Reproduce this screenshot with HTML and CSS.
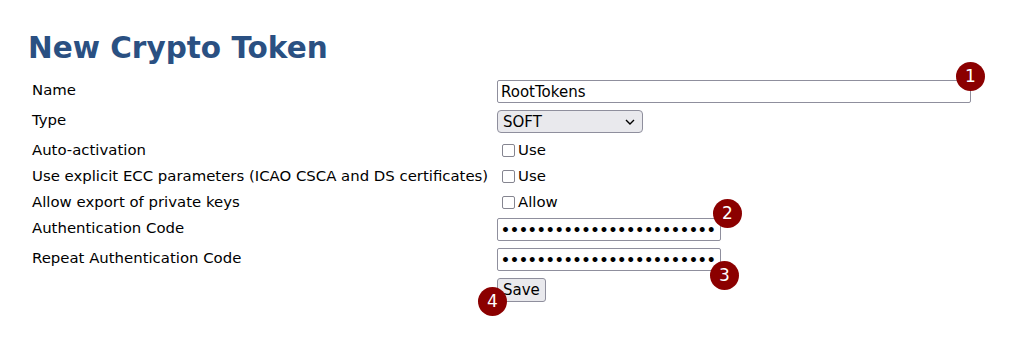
FILE: index.html
```html
<!DOCTYPE html>
<html>
  <head>
    <meta charset="utf-8" />
    <title>New Crypto Token</title>
    <link rel="stylesheet" href="styles.css">
  </head>
  <body>
    <main>
      <h1 class="title">New Crypto Token</h1>

      <form class="token-form">
        <div class="row row-input">
          <label class="label" for="name">Name</label>
          <span class="field">
            <input class="text text-wide" id="name" type="text" value="RootTokens" />
            <span class="badge badge-1">1</span>
          </span>
        </div>

        <div class="row row-input">
          <label class="label" for="type">Type</label>
          <span class="field">
            <select class="select" id="type">
              <option>SOFT</option>
            </select>
            <svg class="chevron" width="10" height="6" viewBox="0 0 10 6">
              <path d="M1 1L5 5L9 1" fill="none" stroke="#000" stroke-width="1.4" />
            </svg>
          </span>
        </div>

        <div class="row row-check">
          <span class="label">Auto-activation</span>
          <label class="check"><input type="checkbox" />Use</label>
        </div>

        <div class="row row-check">
          <span class="label">Use explicit ECC parameters (ICAO CSCA and DS certificates)</span>
          <label class="check"><input type="checkbox" />Use</label>
        </div>

        <div class="row row-check">
          <span class="label">Allow export of private keys</span>
          <label class="check"><input type="checkbox" />Allow</label>
        </div>

        <div class="row row-input">
          <label class="label" for="auth">Authentication Code</label>
          <span class="field">
            <input class="text text-pass" id="auth" type="password" value="abcdefghijklmnopqrstuvwx" />
            <span class="badge badge-2">2</span>
          </span>
        </div>

        <div class="row row-input">
          <label class="label" for="auth2">Repeat Authentication Code</label>
          <span class="field">
            <input class="text text-pass" id="auth2" type="password" value="abcdefghijklmnopqrstuvwx" />
            <span class="badge badge-3">3</span>
          </span>
        </div>

        <div class="row row-submit">
          <span class="label"></span>
          <span class="field">
            <button class="button" type="button">Save</button>
            <span class="badge badge-4">4</span>
          </span>
        </div>
      </form>
    </main>
  </body>
</html>
```

FILE: styles.css
```css
/* Basics */
body,
html {
  margin: 0;
  padding: 0;
  height: 100%;
}
body {
  background: #ffffff;
  color: #000000;
  font-family: "DejaVu Sans", Verdana, sans-serif;
  font-size: 14.9px;
}
* {
  box-sizing: border-box;
}

main {
  padding: 0 28px 40px 28px;
}

.title {
  margin: 31px 0 13px 0;
  font-size: 29.5px;
  line-height: 34px;
  font-weight: bold;
  color: #2a5082;
}

/* Form */
.token-form {
  display: grid;
  grid-template-columns: 465px auto;
  padding-left: 4px;
}
.row {
  display: contents;
}
.label {
  display: block;
  padding-top: 3px;
  line-height: 18px;
}
.row-input .label {
  height: 30px;
}
.row-check .label {
  height: 26px;
}
.field {
  position: relative;
  justify-self: start;
  align-self: start;
}

.text {
  display: block;
  height: 23px;
  margin: 2px 0 0 0;
  padding: 1px 3px;
  border: 1px solid #8f8f9d;
  border-radius: 2px;
  font-family: "DejaVu Sans", Verdana, sans-serif;
  font-size: 15px;
  color: #000000;
}
.text-wide {
  width: 474px;
}
.text-pass {
  width: 224px;
  font-size: 14px;
  font-weight: bold;
}

.select {
  display: block;
  width: 146px;
  height: 23px;
  margin-top: 2px;
  padding: 0 5px;
  border: 1px solid #8f8f9d;
  border-radius: 4px;
  background: #e9e9ed;
  font-family: "DejaVu Sans", Verdana, sans-serif;
  font-size: 15px;
  color: #000000;
  appearance: none;
}
.chevron {
  position: absolute;
  right: 8px;
  top: 11px;
  pointer-events: none;
}

.check {
  display: flex;
  align-items: center;
  height: 20px;
  margin: 2px 0 0 3px;
}
.check input {
  appearance: none;
  width: 13px;
  height: 13px;
  margin: 0 3px 0 2px;
  border: 1.5px solid #858590;
  border-radius: 2px;
  background: #ffffff;
}

.button {
  display: block;
  height: 24px;
  margin-top: 2px;
  padding: 1px 5px;
  border: 1px solid #8f8f9d;
  border-radius: 3px;
  background: #e9e9ed;
  font-family: "DejaVu Sans", Verdana, sans-serif;
  font-size: 15px;
  color: #000000;
}

/* Numbered markers */
.badge {
  position: absolute;
  width: 29px;
  height: 29px;
  border-radius: 50%;
  background: #8b0000;
  color: #ffffff;
  font-family: "DejaVu Sans", Verdana, sans-serif;
  font-size: 17px;
  line-height: 29px;
  text-align: center;
}
.badge-1 {
  right: -14px;
  top: -16px;
}
.badge-2 {
  right: -21px;
  top: -17px;
}
.badge-3 {
  right: -18px;
  bottom: -19px;
}
.badge-4 {
  left: -19px;
  bottom: -14px;
}
```
